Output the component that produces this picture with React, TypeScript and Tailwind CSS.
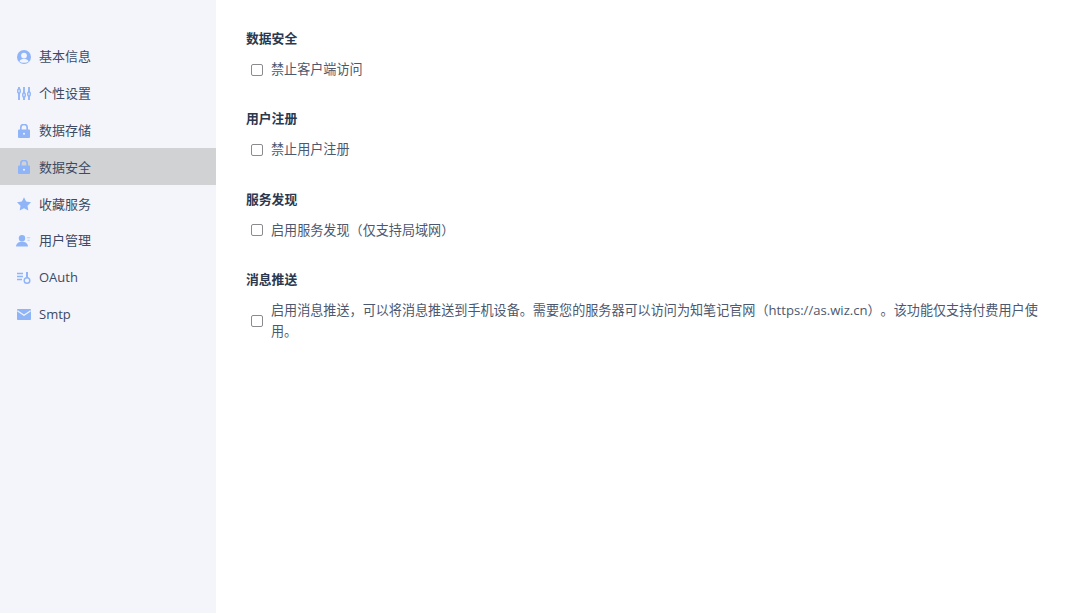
import React from "react";

const font = "font-['Open_Sans','Noto_Sans_CJK_SC',sans-serif]";

const blue = "#8fb4f8";

function UserCircle() {
  return (
    <svg viewBox="0 0 14 14" className="w-[14px] h-[14px]">
      <circle cx="7" cy="7" r="7" fill={blue} />
      <circle cx="7" cy="5.6" r="2.9" fill="#f3f5fb" />
      <path d="M2.4 11.4C3.2 9.5 5 8.9 7 8.9s3.800.6 4.600 2.500A6.300 6.300 0 0 1 7 12.800a6.300 6.300 0 0 1-4.600-1.400z" fill="#f3f5fb" />
    </svg>
  );
}
function Sliders() {
  return (
    <svg viewBox="0 0 14 13" className="w-[14px] h-[13px]" fill="none" stroke={blue}>
      <path d="M2 0v2M2 6v7M7 0v6M7 10v3M12 0v5M12 9v4" strokeWidth="1.800" />
      <rect x=".8" y="2" width="2.400" height="4" rx="1" strokeWidth="1.400" />
      <rect x="5.800" y="6" width="2.400" height="4" rx="1" strokeWidth="1.400" />
      <rect x="10.800" y="5" width="2.400" height="4" rx="1" strokeWidth="1.400" />
    </svg>
  );
}
function Lock() {
  return (
    <svg viewBox="0 0 14 14" className="w-[14px] h-[14px]">
      <path d="M3.800 6V3.600a3.200 3.200 0 0 1 6.400 0V6" fill="none" stroke={blue} strokeWidth="1.600" />
      <rect x="1" y="5.500" width="12" height="8.500" rx="1" fill={blue} />
      <circle cx="7" cy="9.700" r="1" fill="#f3f5fb" />
    </svg>
  );
}
function Star() {
  return (
    <svg viewBox="0 0 14 14" className="w-[14px] h-[14px]">
      <path d="M7 .2l2.100 4.400 4.900.7-3.500 3.400.8 4.800L7 11.200l-4.300 2.300.8-4.800L0 5.300l4.900-.7z" fill={blue} />
    </svg>
  );
}
function UserManage() {
  return (
    <svg viewBox="0 0 15 12" className="w-[15px] h-[12px]">
      <circle cx="6" cy="3.200" r="3.200" fill={blue} />
      <path d="M0 11.500C.3 8.200 3 6.800 6 6.800s5.700 1.400 6 4.700z" fill={blue} />
      <path d="M10.800 2.800h3.400M11.500 5.200h2.200" stroke="#b9cffa" strokeWidth="1.100" />
    </svg>
  );
}
function OAuthIcon() {
  return (
    <svg viewBox="0 0 14 12" className="w-[14px] h-[12px]" fill="none" stroke={blue}>
      <path d="M0 1.500h6M0 4.500h6M0 7.500h5" strokeWidth="1.300" />
      <path d="M10 0v6" strokeWidth="2" />
      <circle cx="10" cy="8.500" r="2.800" strokeWidth="1.400" />
    </svg>
  );
}
function Mail() {
  return (
    <svg viewBox="0 0 14 11" className="w-[14px] h-[11px]">
      <rect width="14" height="11" rx=".8" fill={blue} />
      <path d="M.3 1.800L7 6.300l6.700-4.500" fill="none" stroke="#f3f5fb" strokeWidth="1.200" />
    </svg>
  );
}

const items: [string, React.ReactNode, boolean?][] = [
  ["基本信息", <UserCircle />],
  ["个性设置", <Sliders />],
  ["数据存储", <Lock />],
  ["数据安全", <Lock />, true],
  ["收藏服务", <Star />],
  ["用户管理", <UserManage />],
  ["OAuth", <OAuthIcon />],
  ["Smtp", <Mail />],
];

const sections = [
  ["数据安全", "禁止客户端访问"],
  ["用户注册", "禁止用户注册"],
  ["服务发现", "启用服务发现（仅支持局域网）"],
  [
    "消息推送",
    "启用消息推送，可以将消息推送到手机设备。需要您的服务器可以访问为知笔记官网（https://as.wiz.cn）。该功能仅支持付费用户使用。",
  ],
];

export default function App() {
  return (
    <div className={`flex h-[613px] w-[1080px] overflow-hidden bg-white [text-spacing-trim:space-all] ${font}`}>
      <aside className="w-[216px] shrink-0 bg-[#f3f5fb] pt-[37.3px]">
        {items.map(([label, icon, active]) => (
          <div
            key={label}
            className={`flex h-[36.9px] items-center pl-[16px] pt-[2px] text-[13px] text-[#3c4a63] ${active ? "bg-[#d1d2d4]" : ""}`}
          >
            <span className="flex w-[15px] justify-center">{icon}</span>
            <span className="ml-[8px]">{label}</span>
          </div>
        ))}
      </aside>
      <main className="flex-1 pl-[30px] pr-[30px] pt-[29px]">
        {sections.map(([title, text]) => (
          <section key={title} className="mb-[29.4px]">
            <h3 className="text-[12.800px] leading-[18px] font-bold text-[#2a3850]">{title}</h3>
            <label className="mt-[12px] flex items-center pl-[5px] text-[13.100px] leading-[21px] text-[#4c586f]">
              <span className="h-[12px] w-[12px] shrink-0 rounded-[2px] border-[1.500px] border-[#8a8b8e] bg-white" />
              <span className="ml-[8px]">{text}</span>
            </label>
          </section>
        ))}
      </main>
    </div>
  );
}
